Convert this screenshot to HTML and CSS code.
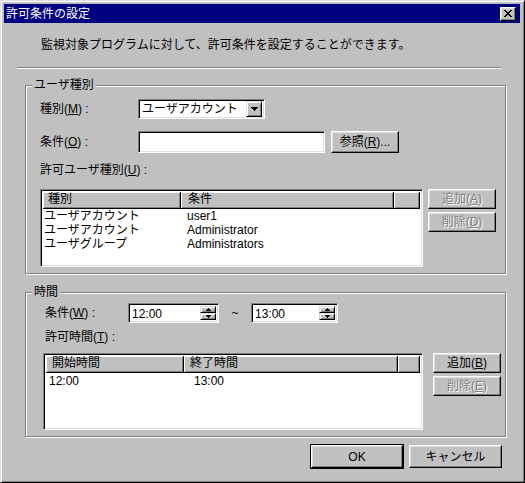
FILE: index.html
```html
<!DOCTYPE html>
<html lang="ja">
<head>
<meta charset="utf-8">
<title>許可条件の設定</title>
<link rel="stylesheet" href="styles.css">
</head>
<body>
<div class="window">
  <div class="titlebar">
    <span class="title">許可条件の設定</span>
    <span class="close"><svg width="8" height="7" viewBox="0 0 8 7" shape-rendering="crispEdges"><path d="M0 0h2v1H0zM6 0h2v1H6zM1 1h2v1H1zM5 1h2v1H5zM2 2h4v1H2zM3 3h2v1H3zM2 4h4v1H2zM1 5h2v1H1zM5 5h2v1H5zM0 6h2v1H0zM6 6h2v1H6z" fill="#000"/></svg></span>
  </div>
  <div class="content">
    <p class="desc">監視対象プログラムに対して、許可条件を設定することができます。</p>
    <div class="sep"></div>

    <div class="group g1">
      <span class="legend">ユーザ種別</span>
      <div class="row row-combo">
        <span class="label lw1">種別(<u>M</u>) :</span>
        <div class="combo">
          <span class="combo-text">ユーザアカウント</span>
          <span class="combo-btn"><svg width="7" height="4" viewBox="0 0 7 4" shape-rendering="crispEdges"><path d="M0 0h7v1H0zM1 1h5v1H1zM2 2h3v1H2zM3 3h1v1H3z" fill="#000"/></svg></span>
        </div>
      </div>
      <div class="row row-edit">
        <span class="label lw1">条件(<u>O</u>) :</span>
        <div class="edit"></div>
        <span class="btn btn-browse">参照(<u>R</u>)...</span>
      </div>
      <div class="row row-label">
        <span class="label">許可ユーザ種別(<u>U</u>) :</span>
      </div>
      <div class="row row-list">
        <div class="list list1">
          <div class="lhead">
            <span class="hcell c1">種別</span>
            <span class="hcell c2">条件</span>
            <span class="hcell c3"></span>
          </div>
          <div class="lrow"><span class="c1">ユーザアカウント</span><span class="c2">user1</span></div>
          <div class="lrow"><span class="c1">ユーザアカウント</span><span class="c2">Administrator</span></div>
          <div class="lrow"><span class="c1">ユーザグループ</span><span class="c2">Administrators</span></div>
        </div>
        <div class="side">
          <span class="btn side-btn disabled">追加(<u>A</u>)</span>
          <span class="btn side-btn disabled">削除(<u>D</u>)</span>
        </div>
      </div>
    </div>

    <div class="group g2">
      <span class="legend">時間</span>
      <div class="row row-spin">
        <span class="label lw2">条件(<u>W</u>) :</span>
        <div class="spin s1">
          <span class="spin-text">12:00</span>
          <span class="spin-btns">
            <span class="sbtn"><svg width="5" height="3" viewBox="0 0 5 3" shape-rendering="crispEdges"><path d="M2 0h1v1H2zM1 1h3v1H1zM0 2h5v1H0z" fill="#000"/></svg></span>
            <span class="sbtn"><svg width="5" height="3" viewBox="0 0 5 3" shape-rendering="crispEdges"><path d="M0 0h5v1H0zM1 1h3v1H1zM2 2h1v1H2z" fill="#000"/></svg></span>
          </span>
        </div>
        <span class="tilde">~</span>
        <div class="spin s2">
          <span class="spin-text">13:00</span>
          <span class="spin-btns">
            <span class="sbtn"><svg width="5" height="3" viewBox="0 0 5 3" shape-rendering="crispEdges"><path d="M2 0h1v1H2zM1 1h3v1H1zM0 2h5v1H0z" fill="#000"/></svg></span>
            <span class="sbtn"><svg width="5" height="3" viewBox="0 0 5 3" shape-rendering="crispEdges"><path d="M0 0h5v1H0zM1 1h3v1H1zM2 2h1v1H2z" fill="#000"/></svg></span>
          </span>
        </div>
      </div>
      <div class="row row-label2">
        <span class="label">許可時間(<u>T</u>) :</span>
      </div>
      <div class="row row-list2">
        <div class="list list2">
          <div class="lhead">
            <span class="hcell c1">開始時間</span>
            <span class="hcell c2">終了時間</span>
            <span class="hcell c3"></span>
          </div>
          <div class="lrow"><span class="c1">12:00</span><span class="c2">13:00</span></div>
        </div>
        <div class="side side2">
          <span class="btn side-btn">追加(<u>B</u>)</span>
          <span class="btn side-btn disabled">削除(<u>E</u>)</span>
        </div>
      </div>
    </div>

    <div class="actions">
      <span class="default-frame"><span class="btn btn-ok">OK</span></span>
      <span class="btn btn-cancel">キャンセル</span>
    </div>
  </div>
</div>
</body>
</html>
```

FILE: styles.css
```css
* { box-sizing: border-box; }
html, body { margin: 0; padding: 0; }
body {
  width: 525px;
  height: 483px;
  overflow: hidden;
  background: #c0c0c0;
  font-family: "Liberation Sans", "Noto Sans CJK JP", sans-serif;
  font-size: 12px;
  color: #000;
}
u { text-decoration: underline; text-underline-offset: 1px; }

.window {
  width: 525px;
  height: 483px;
  background: #c0c0c0;
  border: 1px solid;
  border-color: #dfdfdf #000 #000 #dfdfdf;
  box-shadow: inset 1px 1px 0 #fff, inset -1px -1px 0 #808080;
  padding: 3px 4px 3px 3px;
  display: flex;
  flex-direction: column;
}

.titlebar {
  height: 19px;
  background: #000080;
  display: flex;
  align-items: center;
  justify-content: space-between;
  padding-left: 2px;
  flex: none;
}
.title { color: #fff; font-size: 12px; line-height: 14px; }
.close {
  width: 16px;
  height: 14px;
  margin-right: 4px;
  background: #c0c0c0;
  border: 1px solid;
  border-color: #fff #000 #000 #fff;
  box-shadow: inset -1px -1px 0 #808080, inset 1px 1px 0 #dfdfdf;
  display: flex;
  align-items: center;
  justify-content: center;
}

.content {
  display: flex;
  flex-direction: column;
  padding: 0 14px 0 21px;
}
.desc {
  margin: 14px 0 0 16px;
  line-height: 16px;
  height: 16px;
  font-size: 12px;
  white-space: nowrap;
}
.sep {
  margin: 14px 0 0 -8px;
  width: 484px;
  height: 2px;
  border-top: 1px solid #808080;
  border-bottom: 1px solid #fff;
}

.group {
  position: relative;
  border: 1px solid #808080;
  box-shadow: inset 1px 1px 0 #fff, 1px 1px 0 #fff;
  display: flex;
  flex-direction: column;
}
.legend {
  position: absolute;
  top: -8px;
  left: 6px;
  padding: 0 2px;
  background: #c0c0c0;
  line-height: 14px;
  white-space: nowrap;
}
.g1 { margin-top: 16px; padding: 13px 0 6px 14px; }
.g2 { margin-top: 18px; padding: 10px 0 6px 19px; }

.row { display: flex; align-items: center; }
.label { line-height: 14px; white-space: nowrap; }
.lw1 { width: 98px; flex: none; }
.lw2 { width: 83px; flex: none; }

.row-combo { height: 20px; }
.row-edit { height: 22px; margin-top: 12px; }
.row-label { height: 14px; margin-top: 10px; }
.row-list { margin-top: 12px; align-items: flex-start; }

.row-spin { height: 20px; }
.row-label2 { height: 14px; margin-top: 7px; }
.row-list2 { margin-top: 9px; margin-left: -2px; align-items: flex-start; }

.combo, .edit, .spin, .list {
  background: #fff;
  border: 1px solid;
  border-color: #808080 #fff #fff #808080;
  box-shadow: inset 1px 1px 0 #000, inset -1px -1px 0 #dfdfdf;
}
.combo {
  width: 127px;
  height: 20px;
  padding: 2px;
  display: flex;
  align-items: center;
  justify-content: space-between;
}
.combo-text { padding-left: 1px; line-height: 14px; white-space: nowrap; }
.combo-btn {
  width: 16px;
  height: 16px;
  background: #c0c0c0;
  border: 1px solid;
  border-color: #dfdfdf #000 #000 #dfdfdf;
  box-shadow: inset 1px 1px 0 #fff, inset -1px -1px 0 #808080;
  display: flex;
  align-items: center;
  justify-content: center;
  flex: none;
}
.edit { width: 187px; height: 22px; }

.btn {
  display: flex;
  align-items: center;
  justify-content: center;
  background: #c0c0c0;
  border: 1px solid;
  border-color: #fff #000 #000 #fff;
  box-shadow: inset -1px -1px 0 #808080, inset 1px 1px 0 #dfdfdf;
  line-height: 14px;
  white-space: nowrap;
  flex: none;
}
.btn.disabled { color: #808080; text-shadow: 1px 1px 0 #fff; }
.btn-browse { width: 68px; height: 22px; margin-left: 6px; }

.side { display: flex; flex-direction: column; gap: 3px; margin-left: 5px; }
.side2 { margin-left: 10px; }
.side-btn { width: 68px; height: 20px; }

.list { display: flex; flex-direction: column; padding: 2px; }
.list1 { width: 383px; height: 78px; }
.list2 { width: 380px; height: 77px; }
.lhead { display: flex; height: 17px; flex: none; }
.hcell {
  background: #c0c0c0;
  border-right: 1px solid #000;
  border-bottom: 1px solid #000;
  box-shadow: inset 1px 1px 0 #fff, inset -1px -1px 0 #808080;
  line-height: 15px;
  white-space: nowrap;
}
.hcell.c3 { flex: 1; }
.lrow { display: flex; line-height: 14px; white-space: nowrap; }

.list1 .c1 { width: 138px; flex: none; }
.list1 .c2 { width: 213px; flex: none; }
.list1 .hcell.c1 { padding-left: 5px; }
.list1 .hcell.c2 { padding-left: 7px; }
.list1 .lrow .c1 { padding-left: 1px; }
.list1 .lrow .c2 { padding-left: 6px; }

.list2 .c1 { width: 138px; flex: none; }
.list2 .c2 { width: 214px; flex: none; }
.list2 .hcell.c1 { padding-left: 6px; }
.list2 .hcell.c2 { padding-left: 6px; }
.list2 .lrow { margin-top: 1px; }
.list2 .lrow .c1 { padding-left: 3px; }
.list2 .lrow .c2 { padding-left: 10px; }

.spin {
  height: 20px;
  padding: 2px;
  display: flex;
  align-items: stretch;
  justify-content: space-between;
}
.s1 { width: 91px; }
.s2 { width: 87px; }
.spin-text { padding-left: 1px; line-height: 16px; }
.spin-btns { display: flex; flex-direction: column; width: 16px; }
.sbtn {
  flex: 1;
  background: #c0c0c0;
  border: 1px solid;
  border-color: #dfdfdf #000 #000 #dfdfdf;
  box-shadow: inset 1px 1px 0 #fff, inset -1px -1px 0 #808080;
  display: flex;
  align-items: center;
  justify-content: center;
}
.tilde { width: 32px; text-align: center; line-height: 14px; flex: none; }

.actions {
  display: flex;
  justify-content: flex-end;
  gap: 5px;
  margin-top: 7px;
  padding-right: 4px;
}
.default-frame { border: 1px solid #000; display: flex; }
.btn-ok { width: 92px; height: 23px; }
.btn-cancel { width: 93px; height: 23px; margin-top: 1px; }
```
